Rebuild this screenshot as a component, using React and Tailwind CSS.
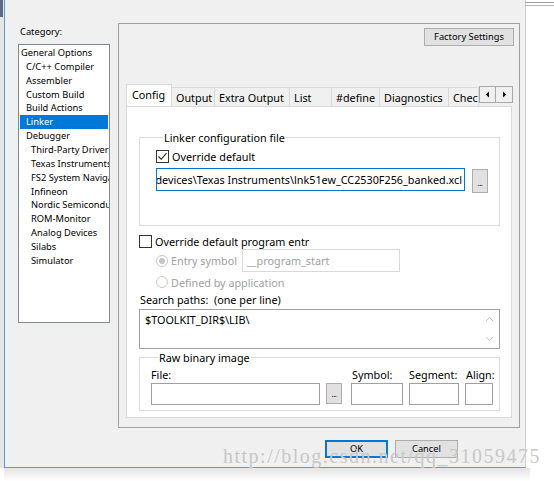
import React from 'react';

const CATEGORIES = [
  { label: 'General Options', level: 0 },
  { label: 'C/C++ Compiler', level: 1 },
  { label: 'Assembler', level: 1 },
  { label: 'Custom Build', level: 1 },
  { label: 'Build Actions', level: 1 },
  { label: 'Linker', level: 1, selected: true },
  { label: 'Debugger', level: 1 },
  { label: 'Third-Party Driver', level: 2 },
  { label: 'Texas Instruments', level: 2 },
  { label: 'FS2 System Navigator', level: 2 },
  { label: 'Infineon', level: 2 },
  { label: 'Nordic Semiconductor', level: 2 },
  { label: 'ROM-Monitor', level: 2 },
  { label: 'Analog Devices', level: 2 },
  { label: 'Silabs', level: 2 },
  { label: 'Simulator', level: 2 },
];

const TABS = [
  { label: 'Config', w: 'w-[46px]', active: true },
  { label: 'Output', w: 'w-[43px]' },
  { label: 'Extra Output', w: 'w-[75px]' },
  { label: 'List', w: 'w-[42px]' },
  { label: '#define', w: 'w-[48px]' },
  { label: 'Diagnostics', w: 'w-[69px]' },
  { label: 'Checksum', w: 'w-[30px]' },
];

const indent = ['pl-[1px]', 'pl-[6px]', 'pl-[11px]'];

const Check = ({ checked }) => (
  <span className="w-[13px] h-[13px] border border-[#333] bg-white flex items-center justify-center shrink-0">
    {checked && (
      <svg width="11" height="11" viewBox="0 0 11 11">
        <path d="M1.5 5.5 L4.2 8.3 L9.5 2.2" fill="none" stroke="#222" strokeWidth="1.1" />
      </svg>
    )}
  </span>
);

const Radio = ({ on }) => (
  <span className="w-[12px] h-[12px] rounded-full border border-[#c8c8c8] bg-white flex items-center justify-center shrink-0">
    {on && <span className="w-[6px] h-[6px] rounded-full bg-[#c4c4c4]" />}
  </span>
);

const DotsButton = ({ className }) => (
  <div className={`bg-[#e1e1e1] border border-[#adadad] flex items-end justify-center pb-[5px] ${className}`}>
    <span className="text-[8px] leading-none tracking-[-0.5px]">...</span>
  </div>
);

export default function App() {
  return (
    <div className="w-[554px] h-[481px] bg-white relative overflow-hidden font-['Noto_Sans',sans-serif] text-black">
      {/* bits of other windows */}
      <div className="absolute left-0 top-0 w-[3px] h-[17px] bg-[#5b6b88]" />
      <div className="absolute left-[525px] top-[2px] w-[29px] h-px bg-[#9c9c9c]" />
      <div className="absolute left-[525px] top-[5px] w-[29px] h-px bg-[#b4b4b4]" />

      <div className="flex">
        <div className="w-[4px] h-[468px] bg-[#e6e6e6]" />
        <div className="w-[522px] h-[468px] bg-[#f0f0f0] border-l border-b border-[#5a9be0] border-r border-r-[#cfcfcf] flex flex-col pt-[23px]">
          <div className="flex">
            {/* Category */}
            <div className="pl-[13px] pt-[2px] w-[113px]">
              <div className="h-[14px] leading-[14px] text-[9.3px] pl-[2px]">Category:</div>
              <div className="mt-[5px] w-[92px] h-[279px] bg-white border border-[#828790] pt-px px-px overflow-hidden">
                {CATEGORIES.map((c) => (
                  <div
                    key={c.label}
                    className={`h-[13.87px] leading-[13.87px] text-[9.3px] whitespace-nowrap ${indent[c.level]} ${
                      c.selected ? 'bg-[#0078d7] text-white' : ''
                    }`}
                  >
                    {c.label}
                  </div>
                ))}
              </div>
            </div>

            {/* Options panel */}
            <div className="w-[402px] h-[405px] border border-[#a0a0a0] flex flex-col">
              <div className="flex justify-end pt-[4px] pr-[5px]">
                <div className="w-[90px] h-[18px] bg-[#e1e1e1] border border-[#adadad] flex items-center justify-center text-[9.3px]">
                  Factory Settings
                </div>
              </div>

              <div className="ml-[7px] mt-[38px] w-[387px]">
                {/* tab strip */}
                <div className="flex items-end h-[22px]">
                  <div className="flex items-end w-[353px] overflow-hidden">
                    {TABS.map((t) =>
                      t.active ? (
                        <div
                          key={t.label}
                          className={`${t.w} shrink-0 h-[23px] -mb-px relative z-10 bg-white border border-b-0 border-[#d9d9d9] pl-[5px] pt-[2px] text-[10.8px] leading-[15px]`}
                        >
                          {t.label}
                        </div>
                      ) : (
                        <div
                          key={t.label}
                          className={`${t.w} shrink-0 h-[19px] bg-[#f0f0f0] border border-b-0 border-l-0 border-[#d9d9d9] pl-[4px] pt-[2px] text-[10.8px] leading-[15px] whitespace-nowrap overflow-hidden`}
                        >
                          {t.label}
                        </div>
                      )
                    )}
                  </div>
                  <div className="flex mb-[3px]">
                    <div className="w-[17px] h-[17px] bg-[#f0f0f0] border border-[#a8a8a8] flex items-center justify-center">
                      <svg width="5" height="7" viewBox="0 0 5 7"><path d="M4 0.5 L0.8 3.5 L4 6.5 Z" fill="#111" /></svg>
                    </div>
                    <div className="w-[17px] h-[17px] bg-[#f0f0f0] border border-l-0 border-[#a8a8a8] flex items-center justify-center">
                      <svg width="5" height="7" viewBox="0 0 5 7"><path d="M1 0.5 L4.2 3.5 L1 6.5 Z" fill="#111" /></svg>
                    </div>
                  </div>
                </div>

                {/* tab page */}
                <div className="w-[386px] h-[312px] bg-white border border-[#d9d9d9] pl-[12px] text-[10.8px] leading-[15px]">
                  <fieldset className="mt-[23px] w-[361px] border border-[#dcdcdc] pl-[16px] pr-[4px] pb-[32px]">
                    <legend className="ml-[7px] px-px">Linker configuration file</legend>
                    <div className="flex items-center gap-[3px] h-[13px] mt-[5px]">
                      <Check checked />
                      <span>Override default</span>
                    </div>
                    <div className="flex mt-[5px]">
                      <div className="w-[309px] h-[23px] border border-[#0078d7] bg-white flex items-center justify-end overflow-hidden pr-[2px] whitespace-nowrap">
                        $TOOLKIT_DIR$\config\devices\Texas Instruments\lnk51ew_CC2530F256_banked.xcl
                      </div>
                      <DotsButton className="ml-[7px] mt-px w-[16px] h-[24px]" />
                    </div>
                  </fieldset>

                  <div className="flex items-center gap-[3px] h-[13px] mt-[9px]">
                    <Check />
                    <span>Override default program entr</span>
                  </div>
                  <div className="flex items-center ml-[17px] mt-[1px] h-[23px] text-[#a0a0a0]">
                    <Radio on />
                    <span className="ml-[3px] w-[71px]">Entry symbol</span>
                    <div className="w-[158px] h-[23px] border border-[#d9d9d9] bg-white flex items-center pl-[4px]">
                      __program_start
                    </div>
                  </div>
                  <div className="flex items-center ml-[17px] mt-[2px] h-[16px] text-[#a0a0a0]">
                    <Radio />
                    <span className="ml-[3px]">Defined by application</span>
                  </div>
                  <div className="ml-px mt-[3px] h-[14px] leading-[14px] whitespace-pre">Search paths:  (one per line)</div>
                  <div className="mt-[2px] w-[361px] h-[40px] border border-[#a0a0a0] bg-white flex justify-between">
                    <span className="pl-[5px] pt-[2px]">$TOOLKIT_DIR$\LIB\</span>
                    <div className="w-[14px] flex flex-col justify-between py-[6px] pr-[3px]">
                      <svg width="9" height="6" viewBox="0 0 9 6"><path d="M1 5 L4.5 1.5 L8 5" fill="none" stroke="#c4c4c4" strokeWidth="1" /></svg>
                      <svg width="9" height="6" viewBox="0 0 9 6"><path d="M1 1 L4.5 4.5 L8 1" fill="none" stroke="#c4c4c4" strokeWidth="1" /></svg>
                    </div>
                  </div>

                  <fieldset className="mt-px w-[361px] border border-[#dcdcdc] pl-[11px] pb-[5px]">
                    <legend className="ml-[7px] px-px">Raw binary image</legend>
                    <div className="flex mt-[2px]">
                      <div className="flex flex-col">
                        <span className="h-[16px]">File:</span>
                        <div className="flex">
                          <div className="w-[169px] h-[22px] border border-[#a0a0a0] bg-white" />
                          <DotsButton className="ml-[6px] w-[16px] h-[21px]" />
                        </div>
                      </div>
                      <div className="flex flex-col ml-[9px]">
                        <span className="h-[16px] pl-px">Symbol:</span>
                        <div className="w-[52px] h-[22px] border border-[#a0a0a0] bg-white" />
                      </div>
                      <div className="flex flex-col ml-[6px]">
                        <span className="h-[16px]">Segment:</span>
                        <div className="w-[50px] h-[22px] border border-[#a0a0a0] bg-white" />
                      </div>
                      <div className="flex flex-col ml-[6px]">
                        <span className="h-[16px] pl-px">Align:</span>
                        <div className="w-[28px] h-[22px] border border-[#a0a0a0] bg-white" />
                      </div>
                    </div>
                  </fieldset>
                </div>
              </div>
            </div>
          </div>

          {/* dialog buttons */}
          <div className="flex justify-end gap-[7px] pr-[67px] mt-[12px]">
            <div className="w-[63px] h-[18px] bg-[#e1e1e1] border border-[#0078d7] shadow-[inset_0_0_0_1px_#0078d7] flex items-center justify-center text-[9.3px]">
              OK
            </div>
            <div className="w-[63px] h-[18px] bg-[#e1e1e1] border border-[#adadad] flex items-center justify-center text-[9.3px]">
              Cancel
            </div>
          </div>
        </div>
      </div>
      <div className="h-[13px] w-[526px] ml-[4px] bg-gradient-to-b from-[#e4e4e4] to-white" />

      {/* watermark */}
      <div className="absolute left-[223px] top-[444px] text-[20px] leading-[24px] tracking-[1.5px] font-['Liberation_Serif',serif] text-[#c8c8c8] whitespace-nowrap pointer-events-none">
        http://blog.csdn.net/qq_31059475
      </div>
    </div>
  );
}
